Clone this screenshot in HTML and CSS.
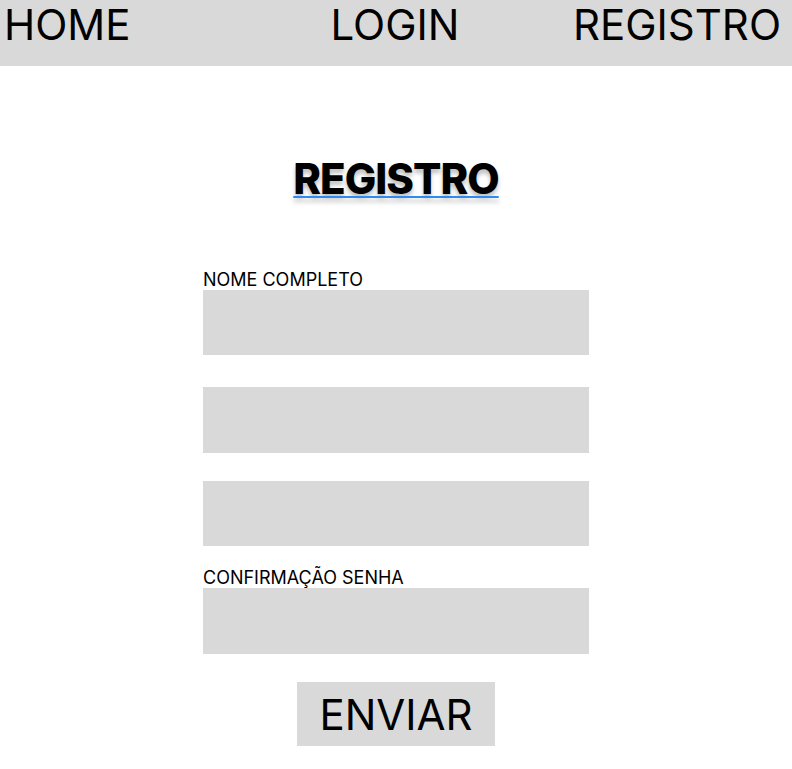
FILE: index.html
```html
<!DOCTYPE html>
<html lang="pt">
<head>
<meta charset="utf-8">
<title>Registro</title>
<link rel="stylesheet" href="styles.css">
</head>
<body>
<header class="topbar">
  <nav class="nav">
    <a class="nav-link nav-left" href="#">HOME</a>
    <a class="nav-link nav-center" href="#">LOGIN</a>
    <a class="nav-link nav-right" href="#">REGISTRO</a>
  </nav>
</header>
<main class="main">
  <h1 class="title">REGISTRO</h1>
  <form class="form">
    <div class="field">
      <label class="label">NOME COMPLETO</label>
      <div class="input"></div>
    </div>
    <div class="field">
      <div class="input input-tall"></div>
    </div>
    <div class="field">
      <div class="input"></div>
    </div>
    <div class="field">
      <label class="label">CONFIRMAÇÃO SENHA</label>
      <div class="input input-tall"></div>
    </div>
    <div class="actions">
      <button class="btn" type="button">ENVIAR</button>
    </div>
  </form>
</main>
</body>
</html>
```

FILE: styles.css
```css
* { box-sizing: border-box; }
html, body { margin: 0; padding: 0; background: #fff; }
body { font-family: Inter, "Noto Sans", sans-serif; color: #000; }

.topbar {
  background: #d9d9d9;
  height: 66px;
}
.nav {
  display: grid;
  grid-template-columns: 1fr auto 1fr;
  align-items: start;
  padding: 0 11px 0 4px;
}
.nav-link {
  color: #000;
  text-decoration: none;
  font-size: 42px;
  line-height: 50px;
  font-weight: 400;
}
.nav-left { justify-self: start; }
.nav-center { justify-self: center; margin-left: 5px; }
.nav-right { justify-self: end; }

.main {
  display: flex;
  flex-direction: column;
  align-items: center;
}
.title {
  margin: 88px 0 0;
  font-size: 42px;
  line-height: 50px;
  font-weight: 800;
  letter-spacing: -1px;
  text-decoration: underline;
  text-decoration-color: #2d8cf0;
  text-decoration-thickness: 2px;
  text-underline-offset: 2px;
  text-shadow: 0 4px 4px rgba(0,0,0,0.25);
}

.form {
  width: 386px;
  margin-top: 66px;
  display: flex;
  flex-direction: column;
}
.field { display: flex; flex-direction: column; }
.field:nth-child(1) { margin-bottom: 32px; }
.field:nth-child(2) { margin-bottom: 28px; }
.field:nth-child(3) { margin-bottom: 22px; }
.field:nth-child(4) { margin-bottom: 28px; }
.label {
  font-size: 18px;
  line-height: 20px;
}
.input {
  height: 65px;
  background: #d9d9d9;
}
.input-tall { height: 66px; }
.actions { display: flex; justify-content: center; }
.btn {
  width: 198px;
  height: 64px;
  background: #d9d9d9;
  border: 0;
  padding: 0;
  font-family: inherit;
  font-size: 42px;
  color: #000;
}
```
